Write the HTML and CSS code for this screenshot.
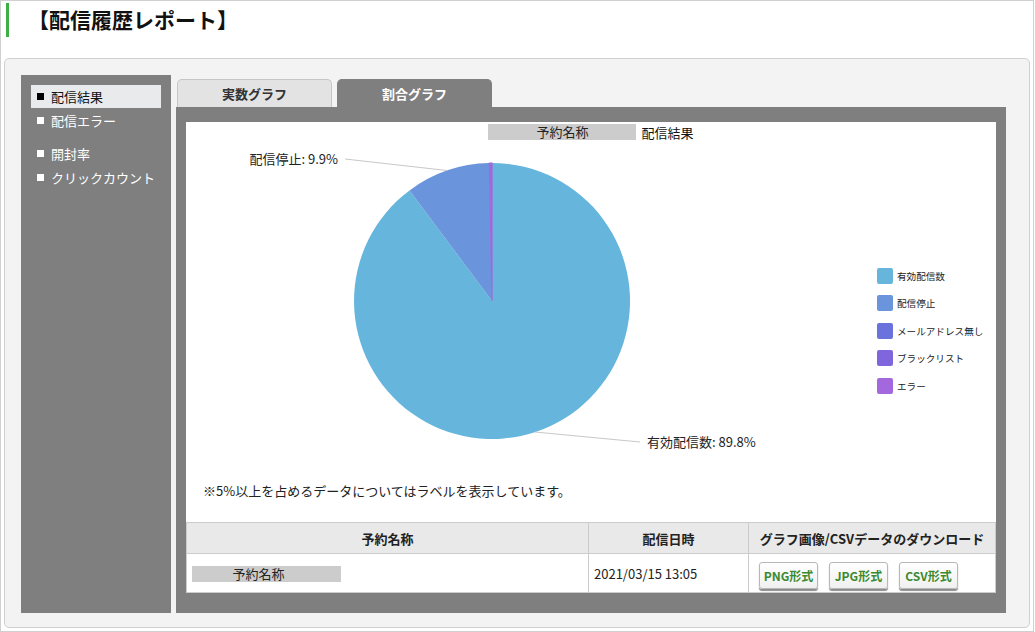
FILE: index.html
```html
<!DOCTYPE html>
<html lang="ja">

<head>
    <meta charset="UTF-8" />
    <meta name="viewport" content="width=device-width, initial-scale=1.0" />
    <title>配信履歴レポート</title>
    <link rel="stylesheet" href="styles.css">
</head>

<body>
    <div class="page">
        <h1 class="page-title">【配信履歴レポート】</h1>

        <div class="report">
            <ul class="side-menu">
                <li class="menu-item active"><span class="bullet"></span>配信結果</li>
                <li class="menu-item"><span class="bullet"></span>配信エラー</li>
                <li class="menu-item spaced"><span class="bullet"></span>開封率</li>
                <li class="menu-item"><span class="bullet"></span>クリックカウント</li>
            </ul>

            <div class="main">
                <div class="tabs">
                    <span class="tab">実数グラフ</span>
                    <span class="tab tab-active">割合グラフ</span>
                </div>

                <div class="tab-body">
                    <div class="sheet">
                        <div class="chart-head">
                            <span class="name-box">予約名称</span>
                            <span>配信結果</span>
                        </div>

                        <svg class="chart" width="810" height="341" viewBox="0 0 810 341">
                            <!-- 有効配信数 89.8% / 配信停止 9.9% / エラー 0.3% -->
                            <path d="M306 161 L306 23 A138 138 0 1 1 223.5 50.4 Z" fill="#66b5dc" />
                            <path d="M306 161 L223.5 50.4 A138 138 0 0 1 303.4 23.03 Z" fill="#6a94dc" />
                            <path d="M306 161 L303.4 23.03 A138 138 0 0 1 306 23 Z" fill="#a368dd" stroke="#a368dd" stroke-width="1.2" />

                            <line x1="159" y1="19" x2="261" y2="30.5" stroke="#c8c8c8" stroke-width="1" />
                            <text x="152" y="24" text-anchor="end" class="slice-label">配信停止: 9.9%</text>

                            <line x1="349" y1="292" x2="454" y2="302" stroke="#c8c8c8" stroke-width="1" />
                            <text x="461" y="307" class="slice-label">有効配信数: 89.8%</text>

                            <rect x="691" y="128" width="16" height="16" rx="2" fill="#66b5dc" />
                            <text x="711" y="140" class="legend-label">有効配信数</text>
                            <rect x="691" y="155" width="16" height="16" rx="2" fill="#6a94dc" />
                            <text x="711" y="167" class="legend-label">配信停止</text>
                            <rect x="691" y="183" width="16" height="16" rx="2" fill="#6a72dc" />
                            <text x="711" y="195" class="legend-label">メールアドレス無し</text>
                            <rect x="691" y="210" width="16" height="16" rx="2" fill="#8066dc" />
                            <text x="711" y="222" class="legend-label">ブラックリスト</text>
                            <rect x="691" y="238" width="16" height="16" rx="2" fill="#a368dd" />
                            <text x="711" y="250" class="legend-label">エラー</text>
                        </svg>

                        <p class="note">※5%以上を占めるデータについてはラベルを表示しています。</p>

                        <table class="summary">
                            <thead>
                                <tr>
                                    <th class="col-name">予約名称</th>
                                    <th class="col-date">配信日時</th>
                                    <th class="col-dl">グラフ画像/CSVデータのダウンロード</th>
                                </tr>
                            </thead>
                            <tbody>
                                <tr>
                                    <td><span class="name-box wide">予約名称</span></td>
                                    <td>2021/03/15 13:05</td>
                                    <td>
                                        <div class="downloads">
                                            <button class="dl-btn">PNG形式</button>
                                            <button class="dl-btn">JPG形式</button>
                                            <button class="dl-btn">CSV形式</button>
                                        </div>
                                    </td>
                                </tr>
                            </tbody>
                        </table>
                    </div>
                </div>
            </div>
        </div>
    </div>
</body>

</html>
```

FILE: styles.css
```css
* {
    box-sizing: border-box;
}

body {
    margin: 0;
    font-family: "Noto Sans CJK JP", "Noto Sans", sans-serif;
    font-size: 13px;
    color: #222;
    background: #fff;
}

.page {
    width: 1034px;
    height: 632px;
    border: 1px solid #d0d0d0;
}

.page-title {
    margin: 2px 0 0 5px;
    height: 34px;
    line-height: 33px;
    padding-left: 19px;
    border-left: 3px solid #3fae45;
    font-size: 21px;
    font-weight: bold;
    color: #111;
}

.report {
    display: flex;
    gap: 5px;
    margin: 21px 3px 0;
    padding: 16px 23px 14px 16px;
    background: #f3f3f3;
    border: 1px solid #cfcfcf;
    border-radius: 5px;
}

/* left menu */
.side-menu {
    list-style: none;
    margin: 0;
    padding: 10px;
    width: 150px;
    height: 538px;
    background: #7f7f7f;
}

.menu-item {
    display: flex;
    align-items: center;
    gap: 7px;
    height: 23px;
    padding-left: 6px;
    color: #fff;
}

.menu-item + .menu-item {
    margin-top: 1px;
}

.menu-item.spaced {
    margin-top: 10px;
}

.menu-item .bullet {
    width: 7px;
    height: 7px;
    background: #fff;
}

.menu-item.active {
    background: #e8eaec;
    color: #111;
}

.menu-item.active .bullet {
    background: #000;
}

/* tabs */
.main {
    flex: 0 0 830px;
    display: flex;
    flex-direction: column;
}

.tabs {
    display: flex;
    gap: 5px;
    margin-top: 4px;
    padding-left: 1px;
}

.tab {
    width: 155px;
    height: 28px;
    line-height: 27px;
    text-align: center;
    font-weight: bold;
    color: #333;
    background: #e3e3e3;
    border: 1px solid #c6c6c6;
    border-bottom: none;
    border-radius: 5px 5px 0 0;
}

.tab-active {
    background: #7f7f7f;
    border-color: #7f7f7f;
    color: #fff;
}

.tab-body {
    flex: 1;
    padding: 15px 10px 21px;
    background: #7f7f7f;
}

.sheet {
    background: #fff;
    height: 470px;
}

.chart-head {
    display: flex;
    justify-content: center;
    align-items: center;
    gap: 5px;
    padding-top: 2px;
    height: 18px;
    color: #111;
}

.name-box {
    display: inline-block;
    width: 148px;
    height: 16px;
    line-height: 16px;
    text-align: center;
    background: #cccccc;
    color: #222;
}

.name-box.wide {
    width: 149px;
    padding-right: 16px;
}

.chart {
    display: block;
}

.slice-label {
    font-size: 13px;
    fill: #222;
}

.legend-label {
    font-size: 9.6px;
    fill: #222;
}

.note {
    margin: 0;
    padding-left: 17px;
    height: 20px;
    line-height: 20px;
    color: #222;
}

/* table */
.summary {
    width: 810px;
    margin-top: 21px;
    border-collapse: collapse;
    table-layout: fixed;
}

.summary th,
.summary td {
    border: 1px solid #cccccc;
}

.summary th {
    height: 31px;
    background: #e8e9e8;
    font-weight: bold;
    color: #222;
}

.summary td {
    height: 39px;
    padding: 0 5px;
    color: #222;
}

.col-name {
    width: 402px;
}

.col-date {
    width: 160px;
}

.downloads {
    display: flex;
    gap: 11px;
    padding: 4px 0 0 5px;
}

.dl-btn {
    width: 59px;
    height: 27px;
    padding: 0;
    font-family: inherit;
    font-size: 12px;
    font-weight: bold;
    color: #3b8a31;
    background: linear-gradient(#ffffff, #f0f0f0);
    border: 1px solid #b8b8b8;
    border-radius: 3px;
    box-shadow: 0 2px 1px #8c8c8c;
    cursor: pointer;
}
```
